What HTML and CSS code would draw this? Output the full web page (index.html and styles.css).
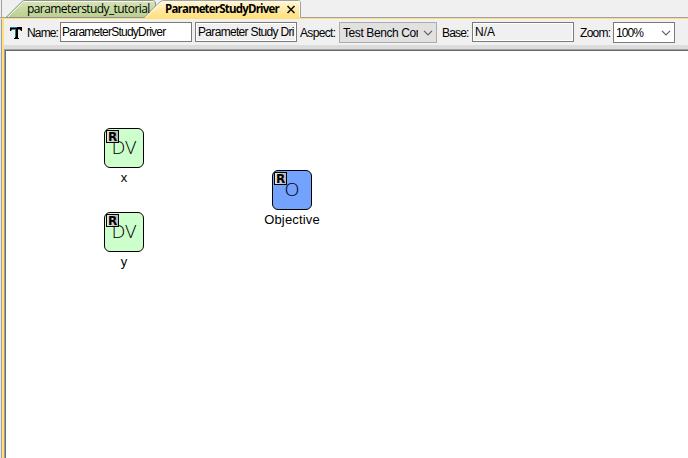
FILE: index.html
```html
<!DOCTYPE html>
<html lang="en">
<head>
<meta charset="utf-8">
<title>ParameterStudyDriver</title>
<link rel="stylesheet" href="styles.css">
</head>
<body>
<div class="window">
  <header class="tabs">
    <svg class="tab-shapes" width="688" height="18" viewBox="0 0 688 18">
      <defs>
        <linearGradient id="green" x2="0" y2="1"><stop offset="0" stop-color="#d6e3b8"/><stop offset="1" stop-color="#b9d08f"/></linearGradient>
        <linearGradient id="gold" x2="0" y2="1"><stop offset="0" stop-color="#fff8dc"/><stop offset="1" stop-color="#ffdf78"/></linearGradient>
      </defs>
      <path d="M0 17.5H688M1.5 0V18" stroke="#a0a0a0"/>
      <path d="M6 17.5L20.500 3Q22.500 .5 25 .5H152Q155.500 .5 155.500 3V17.500Z" fill="url(#green)" stroke="#919191"/>
      <path d="M8 17L21.500 3.500Q23 1.500 25 1.500H154" fill="none" stroke="#f4f8e9"/>
      <path d="M144 18L158.500 3.500Q161 .5 164 .5H298.500Q300.500 .5 300.500 3V18Z" fill="url(#gold)"/>
      <path d="M144 17.500L158.500 3Q161 .5 164 .5H298.500Q300.500 .5 300.500 3V17.500" fill="none" stroke="#a0a0a0"/>
      <path d="M146 17.500L159.500 4Q162 1.500 164 1.500H299.500V17" fill="none" stroke="#fffbe8"/>
      <path d="M287.500 6L294.500 13M294.500 6L287.500 13" stroke="#111" stroke-width="1.600"/>
    </svg>
    <span class="tab">parameterstudy_tutorial</span>
    <span class="tab active">ParameterStudyDriver</span>
  </header>
  <main class="frame">
    <div class="toolbar">
      <svg class="type" width="12" height="13" viewBox="0 0 12 13"><path d="M0 1H12V5H11L10 3.500H8V12H9V13H4V12H5V3.500H2L1 5H0Z" fill="#000"/><path d="M0 1.500H7M5.500 3V11" stroke="#237e8d"/></svg>
      <span class="label name">Name:</span>
      <div class="field title">ParameterStudyDriver</div>
      <div class="field kind muted"><span>Parameter Study Driver</span></div>
      <span class="label aspect">Aspect:</span>
      <div class="field select view"><span>Test Bench Configuration</span><svg width="10" height="6" viewBox="0 0 10 6"><path d="M1 .8L5 4.800L9 .8" fill="none" stroke="#606060" stroke-width="1.200"/></svg></div>
      <span class="label base">Base:</span>
      <div class="field basebox muted">N/A</div>
      <span class="label zoom">Zoom:</span>
      <div class="field select percent"><span>100%</span><svg width="10" height="6" viewBox="0 0 10 6"><path d="M1 .8L5 4.800L9 .8" fill="none" stroke="#606060" stroke-width="1.200"/></svg></div>
    </div>
    <section class="canvas">
      <div class="node node-x"><div class="block"><b>R</b><span>DV</span></div><div class="caption">x</div></div>
      <div class="node node-y"><div class="block"><b>R</b><span>DV</span></div><div class="caption">y</div></div>
      <div class="node node-objective"><div class="block blue"><b>R</b><span>O</span></div><div class="caption">Objective</div></div>
    </section>
  </main>
</div>
</body>
</html>
```
FILE: styles.css
```css
* { box-sizing: border-box; }
body { margin: 0; overflow: hidden; background: #f0f0f0; color: #000; }
.window { width: 688px; height: 458px; display: flex; flex-direction: column; }
.tabs { position: relative; height: 18px; flex: none; display: flex; padding-left: 27px; }
.tab-shapes { position: absolute; left: 0; top: 0; }
.tab { position: relative; width: 138px; font: 12px/18px "Open Sans", sans-serif; letter-spacing: -.58px; white-space: nowrap; }
.tab.active { font-weight: 700; font-size: 11.5px; letter-spacing: -.8px; }
.frame { flex: 1; min-height: 0; display: flex; flex-direction: column; border-left: 1px solid #e3e7ef; box-shadow: inset 1px 0 #a0a0a0, inset 3px 0 #ffe07c; border-top: 1px solid #ffe07c; }
.toolbar { height: 30px; margin-left: 3px; flex: none; display: flex; align-items: flex-start; padding: 3px 0 0 6px; font: 12px/18px "Liberation Sans", Arial, sans-serif; border-bottom: 4px solid #dcdcdc; }
.type { margin-top: 4px; flex: none; }
.label { flex: none; line-height: 22px; white-space: nowrap; }
.name { width: 33px; margin-left: 5px; letter-spacing: -.85px; }
.field { flex: none; height: 20px; border: 1px solid #7a7a7a; padding: 0 2px; background: #fff; overflow: hidden; white-space: nowrap; }
.muted { background: #f0f0f0; box-shadow: inset 0 0 0 1px #fff; }
.title { width: 132px; padding-left: 1px; letter-spacing: -.76px; }
.kind { width: 102px; margin-left: 3px; letter-spacing: -.68px; }
.kind span { display: block; width: 96px; overflow: hidden; }
.aspect { width: 39px; margin-left: 3px; letter-spacing: -.65px; }
.select { height: 21px; display: flex; align-items: center; justify-content: space-between; padding-right: 3px; }
.select svg { flex: none; }
.view { width: 98px; padding-left: 3px; background: #e1e1e1; border-color: #adadad; letter-spacing: -.4px; }
.view span { width: 75px; overflow: hidden; }
.base { width: 30px; margin-left: 5px; letter-spacing: -.85px; }
.basebox { width: 102px; }
.zoom { width: 33px; margin-left: 6px; letter-spacing: -.7px; }
.percent { width: 62px; letter-spacing: -.9px; }
.canvas { position: relative; flex: 1; margin-left: 3px; background: #fff; border: 1px solid #a0a0a0; border-width: 1px 0 0 1px; box-shadow: inset 1px 1px #696969; }
.node { position: absolute; width: 80px; display: flex; flex-direction: column; align-items: center; }
.node-x { left: 79px; top: 78px; }
.node-y { left: 79px; top: 162px; }
.node-objective { left: 247px; top: 120px; }
.block { position: relative; width: 40px; height: 40px; border: 1px solid #000; border-radius: 6px; background: #ccffcc; display: flex; align-items: center; justify-content: center; font: 300 19px/36px "Open Sans", sans-serif; }
.block span { margin-top: -2px; }
.blue { background: #73a2ff; }
.block b { position: absolute; z-index: 1; left: 1px; top: 1px; width: 13px; height: 13px; border: 1px solid #000; background: linear-gradient(90deg, #e4e4e4, #b8b8b8); text-align: center; font: 700 12px/12px "DejaVu Sans", sans-serif; }
.caption { font: 13px/16px "Liberation Sans", Arial, sans-serif; letter-spacing: .15px; margin-top: 2px; }
```
